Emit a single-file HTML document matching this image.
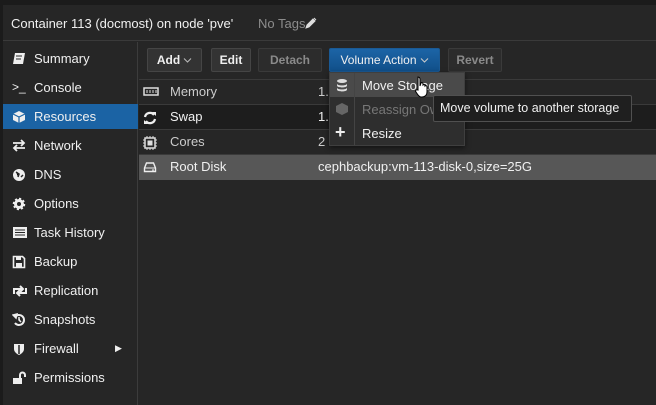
<!DOCTYPE html><html><head><style>
*{box-sizing:border-box;margin:0;padding:0}
body{width:656px;height:405px;background:#1b1b1b;font-family:"Liberation Sans",Arial,sans-serif;font-size:13px;color:#f0f0f0;position:relative;overflow:hidden}
.abs{position:absolute}
#panel{left:3px;top:5px;width:653px;height:400px;background:#262626}
#hdr{left:3px;top:5px;width:653px;height:36px;border-bottom:1px solid #3a3a3a;}
#side{left:3px;top:42px;width:135px;height:363px;border-right:1px solid #3c3c3c}
.si{position:absolute;left:0;width:135px;height:25px;line-height:25px;padding-left:31px;color:#f0f0f0}
.si svg{position:absolute;left:9px;top:6px}
.sel{background:#1b63a4}
.btn{position:absolute;top:48px;height:24px;line-height:22px;border:1px solid #454545;border-radius:2px;background:#333;text-align:center;font-size:12px;font-weight:bold;color:#f0f0f0}
.btn svg{vertical-align:1px;margin-left:3px}
.dis{color:#8a8a8a;background:#2c2c2c;border-color:#3a3a3a}
.row{position:absolute;left:139px;width:517px;height:25px;line-height:24px;border-bottom:1px solid #3a3a3a}
.row .n{position:absolute;left:31px}.row .v{position:absolute;left:179px}
.row svg{position:absolute;left:4px;top:6px}
</style></head><body>
<div class="abs" id="panel"></div>
<div class="abs" id="hdr"><span class="abs" style="left:8px;top:11px;font-size:13px">Container 113 (docmost) on node 'pve'</span><span class="abs" style="left:255px;top:11px;color:#8c8c8c">No Tags<svg width="12" height="12" viewBox="0 0 12 12" style="vertical-align:-1px"><path d="M1 11l1-3 6-6 2 2-6 6z M9 1l2 2" fill="#ddd" stroke="#ddd"/></svg></span></div>
<div class="abs" id="side">
<div class="si" style="top:4px"><svg width="14" height="13"><path d="M3 1h10l-2 11H1z" fill="#eee"/><path d="M4 4h6M4 7h5" stroke="#262626"/></svg>Summary</div>
<div class="si" style="top:33px"><span style="position:absolute;left:9px;font-size:12px">&gt;_</span>Console</div>
<div class="si sel" style="top:62px"><svg width="14" height="14"><path d="M7 1l6 3v6l-6 3-6-3V4z" fill="#eee"/><path d="M1 4l6 3 6-3M7 7v6" stroke="#1b63a4" stroke-width="1.2" fill="none"/></svg>Resources</div>
<div class="si" style="top:91px"><svg width="14" height="13"><path d="M1 4h11M9 1l3 3-3 3M13 9H2M5 6l-3 3 3 3" stroke="#eee" stroke-width="1.8" fill="none"/></svg>Network</div>
<div class="si" style="top:120px"><svg width="14" height="14"><circle cx="7" cy="7" r="6" fill="#eee"/><path d="M4 4l3 2-1 3M9 9l2-2" stroke="#262626" stroke-width="1.5"/></svg>DNS</div>
<div class="si" style="top:149px"><svg width="14" height="14"><circle cx="7" cy="7" r="5" fill="#eee" stroke="#eee" stroke-width="2.5" stroke-dasharray="2 1.9"/><circle cx="7" cy="7" r="2" fill="#262626"/></svg>Options</div>
<div class="si" style="top:178px"><svg width="16" height="13"><rect x="1" y="1" width="14" height="11" fill="#eee"/><path d="M3 4h10M3 6.5h10M3 9h10" stroke="#262626"/></svg>Task History</div>
<div class="si" style="top:207px"><svg width="14" height="14"><path d="M1.5 1.5h9l2 2v9h-11z" fill="none" stroke="#eee" stroke-width="1.6"/><rect x="4" y="2" width="5" height="3" fill="#eee"/><rect x="4" y="8" width="6" height="4" fill="#eee"/></svg>Backup</div>
<div class="si" style="top:236px"><svg width="16" height="14"><path d="M2 10V5h8M8 2l3 3-3 3M14 4v5H6M8 12l-3-3 3-3" stroke="#eee" stroke-width="2" fill="none"/></svg>Replication</div>
<div class="si" style="top:265px"><svg width="14" height="14"><path d="M3 4a5 5 0 1 1 0 6" stroke="#eee" stroke-width="2" fill="none"/><path d="M1 2l3 3 1-4zM7 4v3l2 2" stroke="#eee" stroke-width="1.5" fill="#eee"/></svg>Snapshots</div>
<div class="si" style="top:294px"><svg width="14" height="14"><path d="M2 2h10v5c0 3-3 5-5 6-2-1-5-3-5-6z" fill="#eee"/><path d="M7 3v9" stroke="#262626" stroke-width="1.5"/></svg>Firewall<span style="position:absolute;left:112px;top:0;font-size:9px">&#9654;</span></div>
<div class="si" style="top:323px"><svg width="14" height="14"><rect x="1" y="7" width="9" height="6" fill="#eee"/><path d="M8 7V4a2.5 2.5 0 0 1 5 0v2" stroke="#eee" stroke-width="2" fill="none"/></svg>Permissions</div>
</div>
<div class="abs" style="left:139px;top:42px;width:517px;height:38px;border-bottom:1px solid #3a3a3a"></div>
<div class="btn" style="left:147px;width:55px">Add<svg width="9" height="5"><path d="M1 0.5l3.5 3.5 3.5-3.5" stroke="#bbb" fill="none"/></svg></div>
<div class="btn" style="left:211px;width:40px">Edit</div>
<div class="btn dis" style="left:258px;width:64px">Detach</div>
<div class="btn" style="left:329px;width:111px;background:linear-gradient(#1c64a6,#11508a);border-color:#1a5a95;font-weight:normal">Volume Action<svg width="9" height="5"><path d="M1 0.5l3.5 3.5 3.5-3.5" stroke="#ccc" fill="none"/></svg></div>
<div class="btn dis" style="left:448px;width:54px">Revert</div>
<div class="row" style="top:80px;color:#ccc"><svg width="16" height="12"><rect x="1" y="2" width="14" height="7" fill="none" stroke="#ddd" stroke-width="1.5"/><path d="M4 4v3M7 4v3M10 4v3M13 4v3" stroke="#ddd"/></svg><span class="n">Memory</span><span class="v">1.</span></div>
<div class="row" style="top:105px;background:#1d1d1d"><svg width="14" height="14"><path d="M2 6a5 5 0 0 1 9-2M12 8a5 5 0 0 1-9 2" stroke="#eee" stroke-width="2.2" fill="none"/><path d="M9 1l4 0v4zM5 13l-4 0v-4z" fill="#eee"/></svg><span class="n">Swap</span><span class="v">1.</span></div>
<div class="row" style="top:130px;color:#ccc"><svg width="14" height="14"><rect x="2" y="2" width="10" height="10" fill="none" stroke="#ddd" stroke-width="1.5"/><rect x="4.5" y="4.5" width="5" height="5" fill="#ddd"/><path d="M0 4h2M0 7h2M0 10h2M12 4h2M12 7h2M12 10h2M4 0v2M7 0v2M10 0v2M4 12v2M7 12v2M10 12v2" stroke="#ddd"/></svg><span class="n">Cores</span><span class="v">2</span></div>
<div class="row" style="top:155px;background:#575757;border-color:#575757"><svg width="14" height="12"><path d="M1.5 7l2-5h7l2 5v3.5h-11z" fill="none" stroke="#eee" stroke-width="1.4"/><path d="M1.5 7h11M9 9h2" stroke="#eee"/></svg><span class="n">Root Disk</span><span class="v">cephbackup:vm-113-disk-0,size=25G</span></div>
<div class="abs" style="left:329px;top:72px;width:136px;height:74px;background:#2e2e2e;border:1px solid #3f3f3f;box-shadow:0 2px 5px rgba(0,0,0,.5)">
<div class="abs" style="left:0;top:0;width:134px;height:24px;background:#4a4a4a"></div>
<div class="abs" style="left:24px;top:0;width:1px;height:72px;background:#444"></div>
<svg class="abs" style="left:5px;top:5px" width="14" height="14"><ellipse cx="7" cy="3" rx="5" ry="2" fill="#ddd"/><path d="M2 5.5c0 2.6 10 2.6 10 0v2c0 2.6-10 2.6-10 0zM2 9.5c0 2.6 10 2.6 10 0v2c0 2.6-10 2.6-10 0z" fill="#ddd"/></svg>
<span class="abs" style="left:32px;top:5px">Move Storage</span>
<svg class="abs" style="left:5px;top:29px" width="14" height="14"><path d="M7 1l6 3v6l-6 3-6-3V4z" fill="#666"/></svg>
<span class="abs" style="left:32px;top:29px;color:#777">Reassign Ow</span>
<span class="abs" style="left:5px;top:49px;font-size:18px;font-weight:bold;color:#eee">+</span>
<span class="abs" style="left:32px;top:53px">Resize</span>
</div>
<svg class="abs" style="left:414px;top:76px" width="16" height="22"><path d="M4 1c1 0 2 1 2 2v7l1-3c1-1 2 0 2 1v1c1-1 2 0 2 1 1-1 2 0 2 1v5c0 3-2 5-5 5H7c-2 0-3-2-5-5-1-1 0-3 2-2V3c0-1 0-2 0-2z" fill="#fff" stroke="#000"/></svg>
<div class="abs" style="left:433px;top:95px;width:199px;height:27px;background:#1f1f1f;border:1px solid #505050;border-radius:2px;line-height:25px;padding-left:6px;font-size:12.5px">Move volume to another storage</div>
</body></html>
